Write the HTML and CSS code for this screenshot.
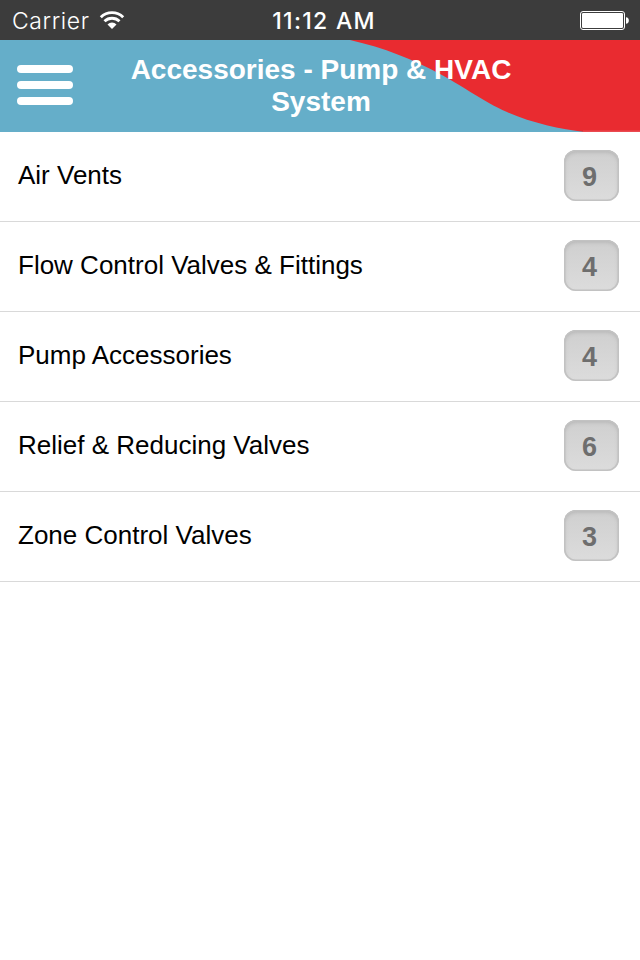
FILE: index.html
```html
<!DOCTYPE html>
<html lang="en">
<head>
    <meta charset="UTF-8">
    <meta name="viewport" content="width=device-width, initial-scale=1.0">
    <title>Accessories - Pump &amp; HVAC System</title>
    <link rel="stylesheet" href="styles.css">
</head>
<body>

    <!-- Status bar -->
    <div class="status-bar">
        <div class="carrier">
            <span>Carrier</span>
            <svg class="wifi" width="26" height="20" viewBox="0 0 26 20">
                <path d="M1.8 7.2 A16 16 0 0 1 24.2 7.2" fill="none" stroke="#fff" stroke-width="2.9"/>
                <path d="M5.5 11.3 A10.7 10.7 0 0 1 20.5 11.3" fill="none" stroke="#fff" stroke-width="2.8"/>
                <path d="M8.5 14.4 A6.2 6.2 0 0 1 17.5 14.4 L13 19 Z" fill="#fff"/>
            </svg>
        </div>
        <span class="time">11:12 AM</span>
        <svg class="battery" width="50" height="20" viewBox="0 0 50 20">
            <rect x="0.5" y="1.5" width="44" height="18" rx="2.5" fill="none" stroke="#fff"/>
            <rect x="2" y="3" width="41" height="15" rx="1.2" fill="#fff"/>
            <path d="M46 7.2 C49.8 7.2 49.8 13.8 46 13.8 Z" fill="#fff"/>
        </svg>
    </div>

    <header class="header">
        <svg class="header-wave" width="640" height="92" viewBox="0 0 640 92">
            <path d="M350 0 C385 8 412 19 440 34 S482 61 507 72 S560 89 585 92 H640 V0 Z" fill="#e92b30"/>
            <rect x="583" y="90.5" width="57" height="1.5" fill="#ea4a50"/>
        </svg>
        <button class="menu-button" aria-label="Menu">
            <span></span>
            <span></span>
            <span></span>
        </button>
        <h1>Accessories - Pump &amp; HVAC System</h1>
    </header>

    <!-- Category list -->
    <ul class="list">
        <li><span class="name">Air Vents</span><span class="count">9</span></li>
        <li><span class="name">Flow Control Valves &amp; Fittings</span><span class="count">4</span></li>
        <li><span class="name">Pump Accessories</span><span class="count">4</span></li>
        <li><span class="name">Relief &amp; Reducing Valves</span><span class="count">6</span></li>
        <li><span class="name">Zone Control Valves</span><span class="count">3</span></li>
    </ul>

</body>
</html>
```
FILE: styles.css
```css
/* Global reset */
* {
    margin: 0;
    padding: 0;
    box-sizing: border-box;
}

body {
    font-family: "Liberation Sans", Arial, sans-serif;
    background-color: #fff;
    color: #000;
    min-height: 100vh;
}

/* Status bar */
.status-bar {
    display: grid;
    grid-template-columns: 1fr auto 1fr;
    align-items: center;
    height: 40px;
    padding: 0 10px 0 12px;
    background-color: #3c3c3c;
    color: #fff;
    font-family: Inter, sans-serif;
    font-size: 23px;
    line-height: 38px;
}

.carrier {
    display: flex;
    align-items: center;
    gap: 9px;
    font-weight: 300;
    letter-spacing: 0.6px;
}

.carrier span {
    padding-top: 2px;
}

.time {
    padding-top: 2px;
    padding-left: 6px;
    font-weight: 500;
    font-size: 23px;
    letter-spacing: 1.3px;
}

.battery {
    justify-self: end;
}

/* Header */
.header {
    position: relative;
    display: flex;
    align-items: center;
    height: 92px;
    padding: 0 17px;
    background-color: #65aec9;
}

.header-wave {
    position: absolute;
    top: 0;
    right: 0;
}

.menu-button {
    position: relative;
    display: flex;
    flex-direction: column;
    gap: 8px;
    width: 56px;
    margin-bottom: 2px;
    border: none;
    background: none;
}

.menu-button span {
    height: 8px;
    border-radius: 4px;
    background-color: #fff;
}

.header h1 {
    position: relative;
    flex: 1;
    padding-left: 42px;
    padding-right: 96px;
    color: #fff;
    font-size: 28px;
    line-height: 32px;
    text-align: center;
}

/* List */
.list {
    list-style: none;
}

.list li {
    display: flex;
    align-items: center;
    justify-content: space-between;
    height: 90px;
    padding: 0 21px 2px 18px;
    border-bottom: 1px solid #d9d9d9;
}

.name {
    margin-bottom: 2px;
    font-size: 26px;
    line-height: 30px;
}

.count {
    width: 55px;
    height: 51px;
    padding-right: 4px;
    border-radius: 12px;
    background: linear-gradient(#cfcfcf, #dcdcdc);
    box-shadow: inset 0 0 0 1.5px #c2c2c2, inset 0 2px 4px #b0b0b0;
    color: #6e6e6e;
    font-size: 27px;
    font-weight: bold;
    line-height: 54px;
    text-align: center;
}
```
